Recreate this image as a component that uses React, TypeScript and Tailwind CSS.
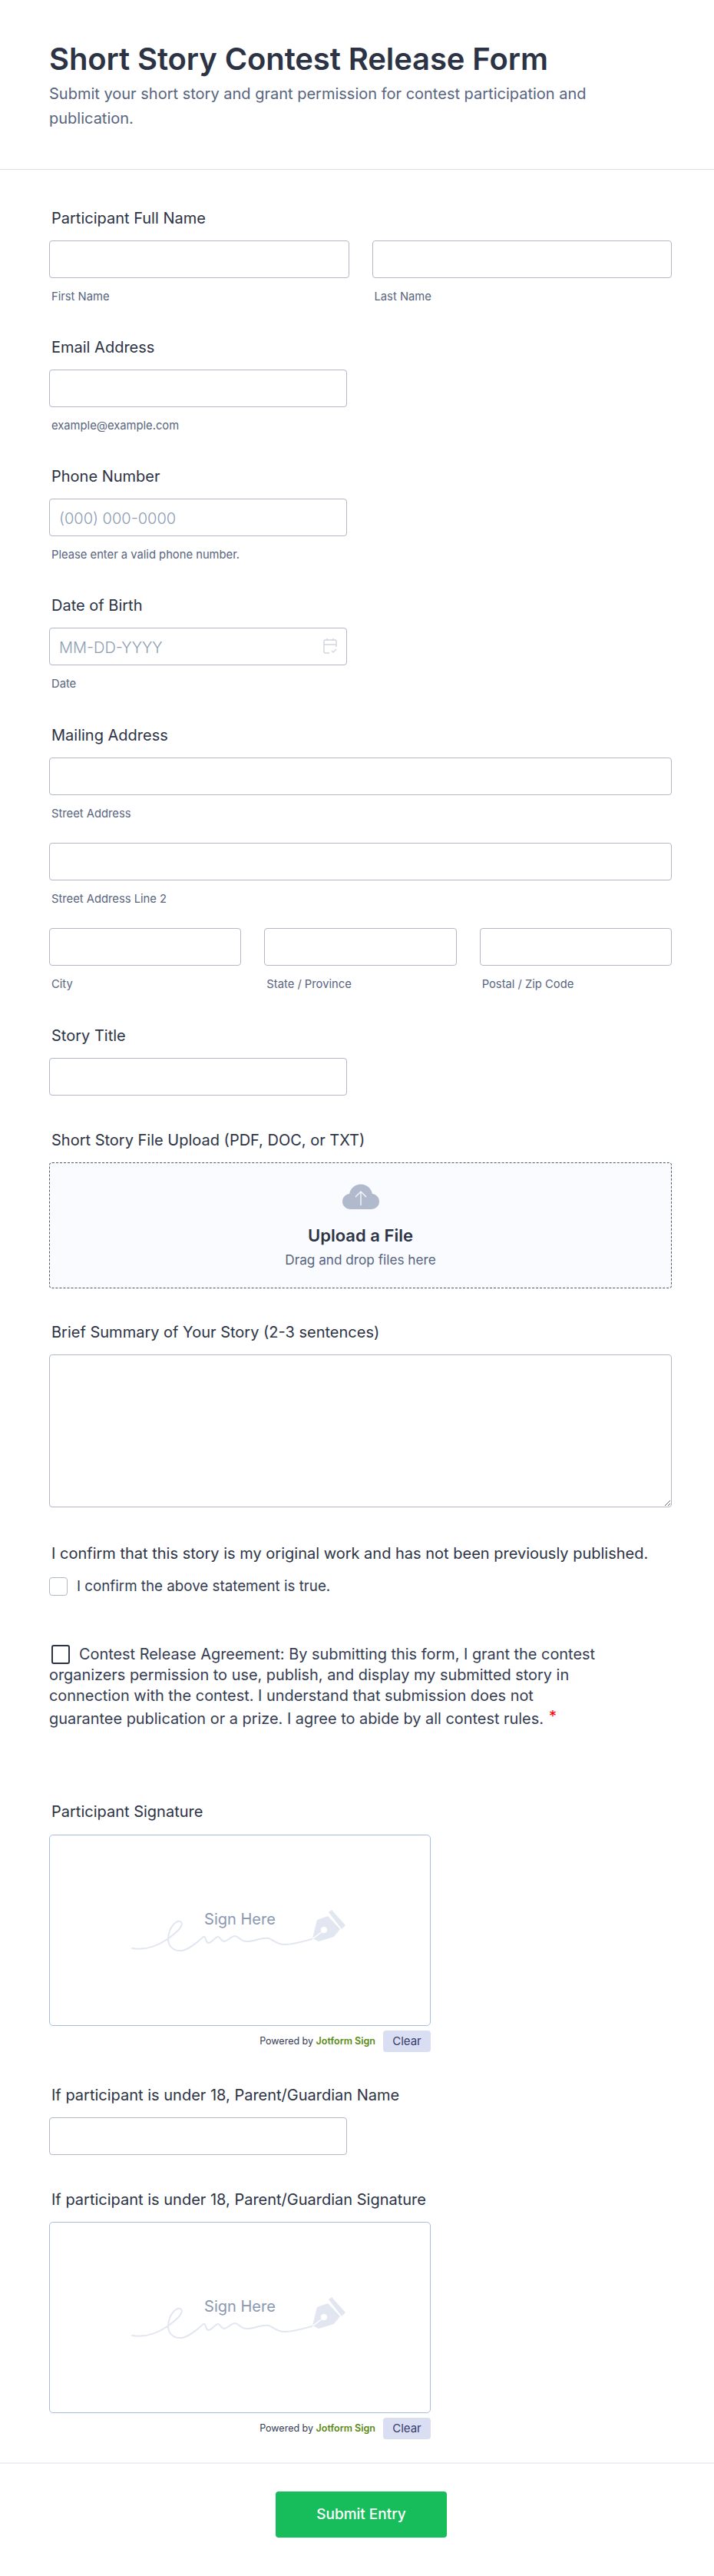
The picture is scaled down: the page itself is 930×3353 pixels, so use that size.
import React from "react";

const inputCls =
  "block w-full h-[49px] rounded-[4px] border border-[#b3b8c6] bg-white pl-3 pr-3 pt-[2px] text-[20px] font-light text-[#2c3345] placeholder:text-[#8c9cb2] outline-none";

function Label({ children }: { children: React.ReactNode }) {
  return <div className="h-[28px] pl-[3px] text-[20px] leading-[28px] text-[#2c3345] mb-[15px] whitespace-nowrap">{children}</div>;
}

function Sub({ children }: { children: React.ReactNode }) {
  return <div className="mt-[14px] h-[20px] pl-[3px] text-[14.750px] leading-[20px] text-[#57647e]">{children}</div>;
}

function SignaturePad() {
  return (
    <div>
      <div className="relative w-[497px] h-[249px] rounded-[5px] border border-[#a8bde0] bg-white flex flex-col items-center pt-[95px]">
        <svg className="absolute left-[85px] top-[72px]" width="320" height="100" viewBox="0 0 320 100" fill="none">
          <path
            d="M22 75 C40 78 55 72 68 63 C78 56 90 46 86 41 C80 36 70 48 69 62 C69 72 75 79 87 78 C98 76 108 66 115 60 C118 58 117 66 121 68 C125 69 130 60 134 60 C137 60 138 66 142 66 C146 66 151 59 156 59 C160 59 163 65 170 66 C178 67 192 60 200 62 C206 64 212 71 222 70 C232 70 245 66 256 63"
            stroke="#e1e6f0"
            strokeWidth="2"
            strokeLinecap="round"
          />
          <path d="M257 62 L263 38 L277 33 L293 50 L285 60 L265 66 Z" fill="#e1e6f0" />
          <path d="M278 28 L282 25 L300 45 L295 50 Z" fill="#e1e6f0" />
          <circle cx="272" cy="51" r="4" fill="#fff" />
          <path d="M258 62 L270 53" stroke="#fff" strokeWidth="1.5" />
        </svg>
        <div className="relative text-[20px] leading-[28px] text-[#8a97b3]">Sign Here</div>
      </div>
      <div className="w-[497px] flex justify-end items-center mt-[6px]">
        <span className="text-[12.500px] text-[#343c52] mr-[10px]">
          Powered by <span className="font-semibold text-[#5a8a14]">Jotform Sign</span>
        </span>
        <span className="w-[62px] h-[28px] rounded-[4px] bg-[#dadef3] text-[15px] leading-[28px] text-center text-[#343c6a]">Clear</span>
      </div>
    </div>
  );
}

export default function App() {
  return (
    <div className="w-[930px] h-[3353px] bg-white overflow-hidden" style={{ fontFamily: "Inter, 'Liberation Sans', sans-serif" }}>
      <header className="h-[221px] border-b border-[#dfe1ea] pl-[64px] pr-[100px] pt-[53px]">
        <h1 className="text-[40px] leading-[48px] font-semibold tracking-[-0.1px] text-[#2c3345]">Short Story Contest Release Form</h1>
        <p className="mt-[5px] text-[20px] leading-[32px] text-[#57647e]">
          Submit your short story and grant permission for contest participation and publication.
        </p>
      </header>

      <main className="pl-[64px] pr-[55px] pt-[49px]">
        <section>
          <Label>Participant Full Name</Label>
          <div className="grid grid-cols-2 gap-[30px]">
            <div><input className={inputCls} /><Sub>First Name</Sub></div>
            <div><input className={inputCls} /><Sub>Last Name</Sub></div>
          </div>
        </section>

        <section className="mt-[42px] w-[388px]">
          <Label>Email Address</Label>
          <input className={inputCls} />
          <Sub>example@example.com</Sub>
        </section>

        <section className="mt-[42px] w-[388px]">
          <Label>Phone Number</Label>
          <input className={inputCls} placeholder="(000) 000-0000" />
          <Sub>Please enter a valid phone number.</Sub>
        </section>

        <section className="mt-[42px] w-[388px]">
          <Label>Date of Birth</Label>
          <div className="relative">
            <input className={inputCls} placeholder="MM-DD-YYYY" />
            <svg className="absolute right-[13px] top-[13px]" width="18" height="22" viewBox="0 0 18 22" fill="none" stroke="#d3d6e0" strokeWidth="1.5">
              <path d="M8 20 H3 a2 2 0 0 1 -2 -2 V5 a2 2 0 0 1 2 -2 H15 a2 2 0 0 1 2 2 V12" />
              <path d="M1 9 H17 M5 1 V4 M13 1 V4" />
              <path d="M11 17 L13 19 L17 15" />
            </svg>
          </div>
          <Sub>Date</Sub>
        </section>

        <section className="mt-[43px]">
          <Label>Mailing Address</Label>
          <input className={inputCls} />
          <Sub>Street Address</Sub>
          <div className="mt-[28px]">
            <input className={inputCls} />
            <Sub>Street Address Line 2</Sub>
          </div>
          <div className="mt-[28px] grid grid-cols-3 gap-[30px]">
            <div><input className={inputCls} /><Sub>City</Sub></div>
            <div><input className={inputCls} /><Sub>State / Province</Sub></div>
            <div><input className={inputCls} /><Sub>Postal / Zip Code</Sub></div>
          </div>
        </section>

        <section className="mt-[43px] w-[388px]">
          <Label>Story Title</Label>
          <input className={inputCls} />
        </section>

        <section className="mt-[44px]">
          <Label>Short Story File Upload (PDF, DOC, or TXT)</Label>
          <div className="h-[164px] rounded-[4px] border border-dashed border-[#50566e] bg-[#fafbff] flex flex-col items-center pt-[27px]">
            <svg width="48" height="34" viewBox="0 0 48 34">
              <path d="M11 33 C4.500 33 0 28.500 0 23 C0 17.500 4 13.500 9 13 C10.500 5.500 16.500 0.500 24 0.500 C31.500 0.500 37.500 5.500 39 13 C44 13.500 48 17.500 48 23 C48 28.500 43.500 33 37 33 Z" fill="#b1b9cc" />
              <path d="M24 28 V10 M17 17 L24 10 L31 17" stroke="#f3f4f9" strokeWidth="1.5" fill="none" />
            </svg>
            <div className="mt-[19px] text-[22px] leading-[28px] font-semibold text-[#2c3345]">Upload a File</div>
            <div className="mt-[6px] text-[17.200px] leading-[24px] text-[#57647e]">Drag and drop files here</div>
          </div>
        </section>

        <section className="mt-[43px]">
          <Label>Brief Summary of Your Story (2-3 sentences)</Label>
          <textarea className="block w-full h-[199px] rounded-[4px] border border-[#b3b8c6] bg-white outline-none" />
        </section>

        <section className="mt-[46px]">
          <div className="h-[28px] pl-[3px] text-[20px] leading-[28px] text-[#2c3345] whitespace-nowrap">
            I confirm that this story is my original work and has not been previously published.
          </div>
          <div className="mt-[17px] flex items-center gap-[12px] h-[24px]">
            <span className="w-[24px] h-[24px] rounded-[4px] border border-[#b3b8c6] bg-white" />
            <span className="text-[18.750px] leading-[24px] text-[#343c52]">I confirm the above statement is true.</span>
          </div>
        </section>

        <section className="mt-[63px] w-[716px] text-[19.900px] leading-[27px] text-[#343c52]">
          <span className="inline-block align-[-6px] w-[24px] h-[25px] ml-[3px] mr-[12px] rounded-[3px] border-2 border-[#2c3345]" />
          Contest Release Agreement: By submitting this form, I grant the contest organizers permission to use, publish, and display my submitted story in connection with the contest. I understand that submission does not guarantee publication or a prize. I agree to abide by all contest rules.
          <span className="ml-[7px] text-[#f00] align-[3px]">*</span>
        </section>

        <section className="mt-[93px]">
          <div className="mb-[16px]"><div className="h-[28px] pl-[3px] text-[20px] leading-[28px] text-[#2c3345]">Participant Signature</div></div>
          <SignaturePad />
        </section>

        <section className="mt-[42px]">
          <Label>If participant is under 18, Parent/Guardian Name</Label>
          <div className="w-[388px]"><input className={inputCls} /></div>
        </section>

        <section className="mt-[44px]">
          <Label>If participant is under 18, Parent/Guardian Signature</Label>
          <SignaturePad />
        </section>
      </main>

      <footer className="mt-[30px] border-t-2 border-[#eef0f5] flex justify-center pl-[11px] pt-[36px]">
        <button className="w-[223px] h-[60px] rounded-[4px] bg-[#18bd5b] text-[19px] font-medium text-white">Submit Entry</button>
      </footer>
    </div>
  );
}
